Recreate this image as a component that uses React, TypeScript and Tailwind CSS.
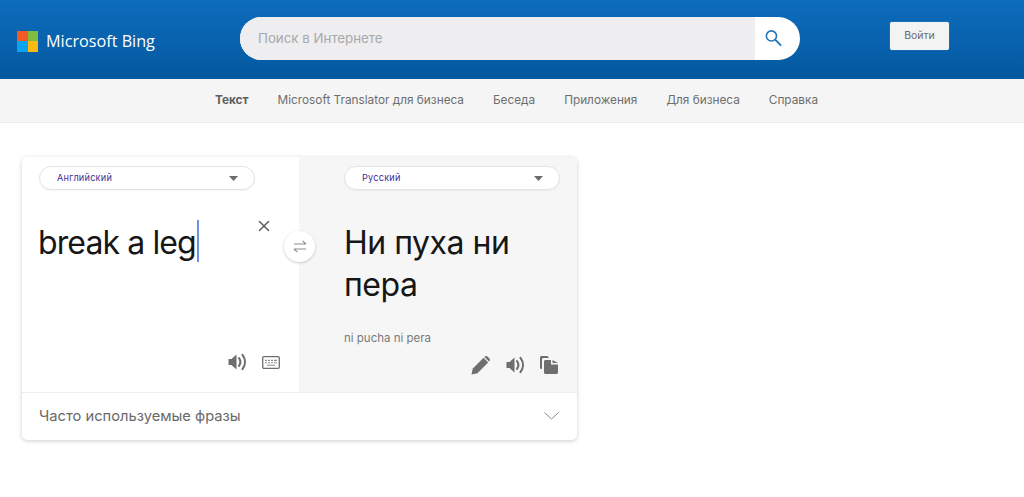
import { X } from 'lucide-react';

const navItems = ['Microsoft Translator для бизнеса', 'Беседа', 'Приложения', 'Для бизнеса', 'Справка'];

function LangSelect({ label }: { label: string }) {
  return (
    <div className="flex h-[24px] w-[216px] items-center justify-between rounded-full border border-[#e3e3e3] bg-white pl-[17px] pr-[16px] shadow-[0_1px_1px_rgba(0,0,0,0.04)]">
      <span className="text-[9.2px] tracking-[0.2px] text-[#3f2f96]">{label}</span>
      <svg width="9" height="5" viewBox="0 0 9 5">
        <path d="M0 0h9L4.5 5z" fill="#6b6b6b" />
      </svg>
    </div>
  );
}

function SpeakerIcon() {
  return (
    <svg width="19" height="18" viewBox="0 0 19 18" fill="none">
      <path d="M0.5 6H3.5L8.5 1.5V16.5L3.5 12H0.5z" fill="#6e6e6e" />
      <path d="M11 5C12.8 7.6 12.8 10.4 11 13" stroke="#6e6e6e" strokeWidth="2.1" strokeLinecap="round" />
      <path d="M14.5 1.8C17.8 6.2 17.8 11.8 14.5 16.2" stroke="#6e6e6e" strokeWidth="2.1" strokeLinecap="round" />
    </svg>
  );
}

function KeyboardIcon() {
  return (
    <svg width="18" height="13" viewBox="0 0 18 13" fill="none">
      <rect x="0.7" y="0.7" width="16.6" height="11.6" rx="1.2" stroke="#6e6e6e" strokeWidth="1.3" />
      <path d="M3 4.4h2M6 4.4h2M9 4.4h2M12 4.4h3M3 6.8h2M6 6.8h2M9 6.8h2M12 6.8h3M5 9.2h8" stroke="#8a8a8a" strokeWidth="1.1" />
    </svg>
  );
}

function PencilIcon() {
  return (
    <svg width="20" height="20" viewBox="0 0 20 20">
      <path d="M0.5 19.5L1.8 13.6L12.6 2.8L17.2 7.4L6.4 18.2z" fill="#6e6e6e" />
      <path d="M13.8 1.6C14.6 0.8 15.7 0.8 16.5 1.6L18.4 3.5C19.2 4.3 19.2 5.4 18.4 6.2L18 6.6L13.4 2z" fill="#6e6e6e" />
    </svg>
  );
}

function CopyIcon() {
  return (
    <svg width="18" height="18" viewBox="0 0 18 18">
      <path d="M0 1.5C0 0.7 0.7 0 1.5 0H7.5L9 2H3.5C2.7 2 2 2.7 2 3.5V13H1.5C0.7 13 0 12.3 0 11.5z" fill="#6e6e6e" />
      <path d="M4 5.5C4 4.7 4.7 4 5.5 4H11V8.5H18V16.5C18 17.3 17.3 18 16.5 18H5.5C4.7 18 4 17.3 4 16.5z" fill="#6e6e6e" />
      <path d="M12.5 4L18 7H12.5z" fill="#6e6e6e" />
    </svg>
  );
}

function SwapIcon() {
  return (
    <svg width="14" height="13" viewBox="0 0 14 13" fill="none" stroke="#8a8a8a" strokeWidth="1.1">
      <path d="M1 4H13M9.5 0.8L13 4" />
      <path d="M13 9H1M4.5 12.2L1 9" />
    </svg>
  );
}

export default function App() {
  return (
    <div className="h-[497px] w-[1024px] overflow-hidden bg-white font-['Inter',sans-serif]">
      {/* Header */}
      <header className="flex h-[79px] items-center bg-gradient-to-b from-[#0e6cbd] to-[#04599f] pl-[17px]">
        <div className="flex w-[223px] items-center pt-[4px]">
          <div className="grid h-[21px] w-[21px] grid-cols-2 grid-rows-2">
            <span className="bg-[#f25a26]" />
            <span className="bg-[#80bc41]" />
            <span className="bg-[#08a5ee]" />
            <span className="bg-[#fdb913]" />
          </div>
          <span className="ml-[8px] font-['Open_Sans',sans-serif] text-[16.2px] font-medium text-white">Microsoft Bing</span>
        </div>
        <div className="mb-[2px] flex h-[43px] w-[560px] overflow-hidden rounded-full bg-white">
          <div className="flex flex-1 items-center bg-[#eeeef0] pl-[18px] text-[13.3px] text-[#a8a8ab]">Поиск в Интернете</div>
          <div className="flex w-[45px] items-center pb-[1px] pl-[10px]">
            <svg width="17" height="18" viewBox="0 0 18 18" fill="none" stroke="#1f74ba" strokeWidth="1.7">
              <circle cx="6.8" cy="6.8" r="5.4" />
              <path d="M10.8 10.8L17 17" strokeWidth="2" />
            </svg>
          </div>
        </div>
        <button className="mb-[8px] ml-[90px] h-[28px] w-[59px] rounded-[2px] bg-[#f3f3f4] text-[10.5px] text-[#6b6b6b] shadow-[0_0_1px_rgba(255,255,255,0.6)]">Войти</button>
      </header>

      {/* Nav */}
      <nav className="flex h-[44px] items-center justify-center gap-[29px] border-b border-[#ececec] bg-[#f5f5f6] pl-[9px] pt-[1px] text-[11.8px] text-[#6e6e6e]">
        <span className="font-bold text-[#5f5f5f]">Текст</span>
        {navItems.map((item) => (
          <span key={item}>{item}</span>
        ))}
      </nav>

      {/* Translator card */}
      <main className="pl-[22px] pt-[34px]">
        <div className="w-[555px] rounded-[5px] bg-white shadow-[0_1px_4px_rgba(0,0,0,0.2)]">
          <div className="relative flex h-[236px] border-b border-[#ececec]">
            <section className="relative w-[277px] pl-[17px] pt-[9px]">
              <LangSelect label="Английский" />
              <div className="mt-[30px] -ml-[1px] flex h-[42px] items-center pt-[3px] text-[32px] tracking-[-0.9px] text-[#161616]">
                break a leg
                <span className="-mt-[3px] ml-[1px] h-[42px] w-[2px] bg-[#6f8fe0]" />
              </div>
              <X className="absolute left-[233px] top-[60px] h-[18px] w-[18px] text-[#5f5f5f]" strokeWidth={2} />
              <div className="absolute left-[206px] top-[196px] flex items-center gap-[15px]">
                <SpeakerIcon />
                <KeyboardIcon />
              </div>
            </section>
            <section className="relative flex-1 rounded-tr-[5px] bg-[#f6f6f6] pl-[45px] pt-[9px]">
              <LangSelect label="Русский" />
              <div className="mt-[32px] w-[200px] text-[32px] leading-[42px] tracking-[-0.5px] text-[#161616]">Ни пуха ни пера</div>
              <div className="mt-[24px] text-[11.5px] text-[#7a7a7a]">ni pucha ni pera</div>
              <div className="absolute left-[172px] top-[198px] flex items-center gap-[15px]">
                <PencilIcon />
                <SpeakerIcon />
                <CopyIcon />
              </div>
            </section>
            <div className="absolute left-[262px] top-[74px] flex h-[31px] w-[31px] items-center justify-center rounded-full bg-white shadow-[0_1px_3px_rgba(0,0,0,0.2)]">
              <SwapIcon />
            </div>
          </div>
          <div className="flex h-[47px] items-center justify-between pl-[17px] pr-[18px] text-[14.7px] text-[#6a6a6a]">
            <span>Часто используемые фразы</span>
            <svg width="15" height="8" viewBox="0 0 15 8" fill="none" stroke="#8a8a8a" strokeWidth="1" className="mb-[2px]">
              <path d="M0.5 0.5L7.5 7L14.5 0.5" />
            </svg>
          </div>
        </div>
      </main>
    </div>
  );
}
